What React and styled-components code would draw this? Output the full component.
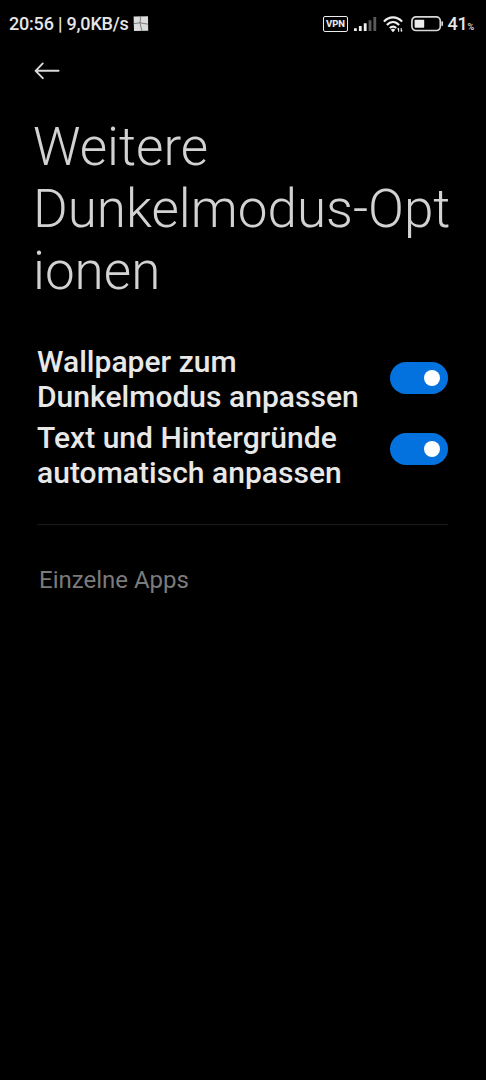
import React, { useState } from 'react';
import styled, { createGlobalStyle } from 'styled-components';

const App = () => {
  const [wallpaper, setWallpaper] = useState(true);
  const [autoText, setAutoText] = useState(true);

  return (
    <Screen>
      <GlobalStyle />
      <StatusBar>
        <StatusText>20:56 | 9,0KB/s</StatusText>
        <WindowIcon />
        <StatusIcons>
          <VpnBadge>VPN</VpnBadge>
          <SignalIcon />
          <WifiIcon />
          <BatteryIcon />
        </StatusIcons>
        <BatteryLevel>
          41<small>%</small>
        </BatteryLevel>
      </StatusBar>

      <BackButton aria-label="Zurück">
        <svg width="26" height="18" viewBox="0 0 26 18">
          <path d="M8.8 1.4 1.6 8.8l7.2 7.4M1.6 8.8H24.6" />
        </svg>
      </BackButton>

      <Title>
        Weitere
        <br />
        Dunkelmodus-Opt
        <br />
        ionen
      </Title>

      <Options>
        <Option>
          <OptionLabel>
            Wallpaper zum
            <br />
            Dunkelmodus anpassen
          </OptionLabel>
          <Switch $on={wallpaper} onClick={() => setWallpaper(!wallpaper)} />
        </Option>
        <Option>
          <OptionLabel>
            Text und Hintergründe
            <br />
            automatisch anpassen
          </OptionLabel>
          <Switch $on={autoText} onClick={() => setAutoText(!autoText)} />
        </Option>
      </Options>

      <Divider />
      <SectionTitle>Einzelne Apps</SectionTitle>
    </Screen>
  );
};

const WindowIcon = () => (
  <WindowSvg width="16" height="16" viewBox="0 0 16 16">
    <path d="M.6 .6 15 .2 15.2 14.8 1 15z" fill="#dcdcdc" stroke="none" />
    <path d="M7.6 .5 7 7 8.9 14.8M.7 7.6 7 6.8 15 8.2" />
  </WindowSvg>
);

const SignalIcon = () => (
  <SignalSvg width="23" height="15" viewBox="0 0 23 15">
    <path d="M0 11.3h2.8V14H0zM4.9 9h2.8v5H4.9zM9.8 6.2h2.8V14H9.8z" fill="#f0f0f0" />
    <path d="M14.6 3.2h2.8V14h-2.8zM19.4 0h2.8v14h-2.8z" fill="#5a5a5a" />
  </SignalSvg>
);

const WifiIcon = () => (
  <WifiSvg width="22" height="17" viewBox="0 0 22 17">
    <path d="M.9 5.6C6-.1 14-.1 19.1 5.6M3.9 9C7.4 5 12.6 5 16.1 9M6.8 12.1c1.9-2 4.5-2 6.4 0" />
    <path d="M7.7 13.7c1.4-1.4 3.2-1.4 4.6 0L10 16.3z" fill="#f0f0f0" stroke="none" />
    <path d="M15.6 12.2v3.6M14.6 13.4l1-1.2M18.2 11.9v3.6M19.2 14.3l-1 1.2" strokeWidth="1.1" />
  </WifiSvg>
);

const BatteryIcon = () => (
  <BatterySvg width="33" height="16" viewBox="0 0 33 16">
    <rect x=".9" y=".9" width="28.4" height="13.6" rx="4" />
    <rect x="3.6" y="3.7" width="9.6" height="8" rx=".8" fill="#ededed" stroke="none" />
    <path d="M31.2 5.4v4.4" />
  </BatterySvg>
);

const GlobalStyle = createGlobalStyle`
  * {
    box-sizing: border-box;
  }

  body {
    margin: 0;
    background: #000;
    font-family: Roboto, 'Liberation Sans', sans-serif;
  }
`;

const Screen = styled.main`
  width: 486px;
  height: 1080px;
  background: #000;
  display: flex;
  flex-direction: column;
  overflow: hidden;
`;

const StatusBar = styled.header`
  height: 48px;
  padding: 0 12px 0 9px;
  display: flex;
  align-items: center;
  flex-shrink: 0;
  color: #e6e6e6;
`;

const StatusText = styled.span`
  font-size: 18px;
  font-weight: 500;
  line-height: 20px;
  letter-spacing: -0.2px;
  white-space: nowrap;
`;

const WindowSvg = styled.svg`
  margin-left: 4px;
  stroke: #666;
  stroke-width: 0.8;
  fill: none;
`;

const StatusIcons = styled.div`
  margin-left: auto;
  display: flex;
  align-items: center;
`;

const VpnBadge = styled.span`
  width: 25px;
  height: 16px;
  margin-right: 6px;
  border: 1.5px solid #ededed;
  border-radius: 2px;
  display: flex;
  align-items: center;
  justify-content: center;
  font-size: 9.5px;
  font-weight: 800;
  line-height: 1;
`;

const SignalSvg = styled.svg`
  margin-right: 6px;
`;

const WifiSvg = styled.svg`
  margin-right: 6px;
  fill: none;
  stroke: #f0f0f0;
  stroke-width: 2.1;
`;

const BatterySvg = styled.svg`
  fill: none;
  stroke: #d8d8d8;
  stroke-width: 1.7;
`;

const BatteryLevel = styled.span`
  display: flex;
  align-items: baseline;
  margin-left: 3.5px;
  font-size: 18px;
  font-weight: 500;
  line-height: 20px;
  letter-spacing: -0.2px;

  small {
    font-size: 9px;
    line-height: 1;
  }
`;

const BackButton = styled.button`
  width: 26px;
  height: 18px;
  margin: 14px 0 0 34px;
  padding: 0;
  border: none;
  background: none;
  cursor: pointer;
  flex-shrink: 0;

  svg {
    display: block;
    fill: none;
    stroke: #dadada;
    stroke-width: 1.9;
    stroke-linecap: round;
    stroke-linejoin: round;
  }
`;

const Title = styled.h1`
  margin: 36px 0 0 33px;
  color: #d2d2d2;
  font-size: 53px;
  font-weight: 300;
  line-height: 62px;
  white-space: nowrap;
`;

const Options = styled.section`
  margin-top: 43px;
  padding: 0 38px 0 37px;
  display: flex;
  flex-direction: column;
  gap: 5px;
`;

const Option = styled.div`
  height: 70.5px;
  display: flex;
  align-items: flex-start;
  justify-content: space-between;
`;

const OptionLabel = styled.div`
  margin-top: -1px;
  color: #e8e8e8;
  font-size: 30px;
  font-weight: 500;
  line-height: 35.2px;
  letter-spacing: 0.03px;
  white-space: nowrap;
`;

const Switch = styled.button`
  width: 58px;
  height: 32px;
  margin-top: 17px;
  padding: 0 8px;
  border: none;
  border-radius: 16px;
  background: ${props => (props.$on ? '#0472de' : '#333')};
  display: flex;
  align-items: center;
  justify-content: ${props => (props.$on ? 'flex-end' : 'flex-start')};
  cursor: pointer;
  flex-shrink: 0;

  ${Option} + ${Option} & {
    margin-top: 12px;
  }

  &::after {
    content: '';
    width: 16px;
    height: 16px;
    border-radius: 50%;
    background: #fff;
  }
`;

const Divider = styled.hr`
  width: 411px;
  height: 1px;
  margin: 33px 0 0 37px;
  border: none;
  background: #1b1b1b;
  flex-shrink: 0;
`;

const SectionTitle = styled.h2`
  margin: 41px 0 0 39px;
  color: #7b7b7b;
  font-size: 24px;
  font-weight: 400;
  line-height: 28px;
`;

export default App;
